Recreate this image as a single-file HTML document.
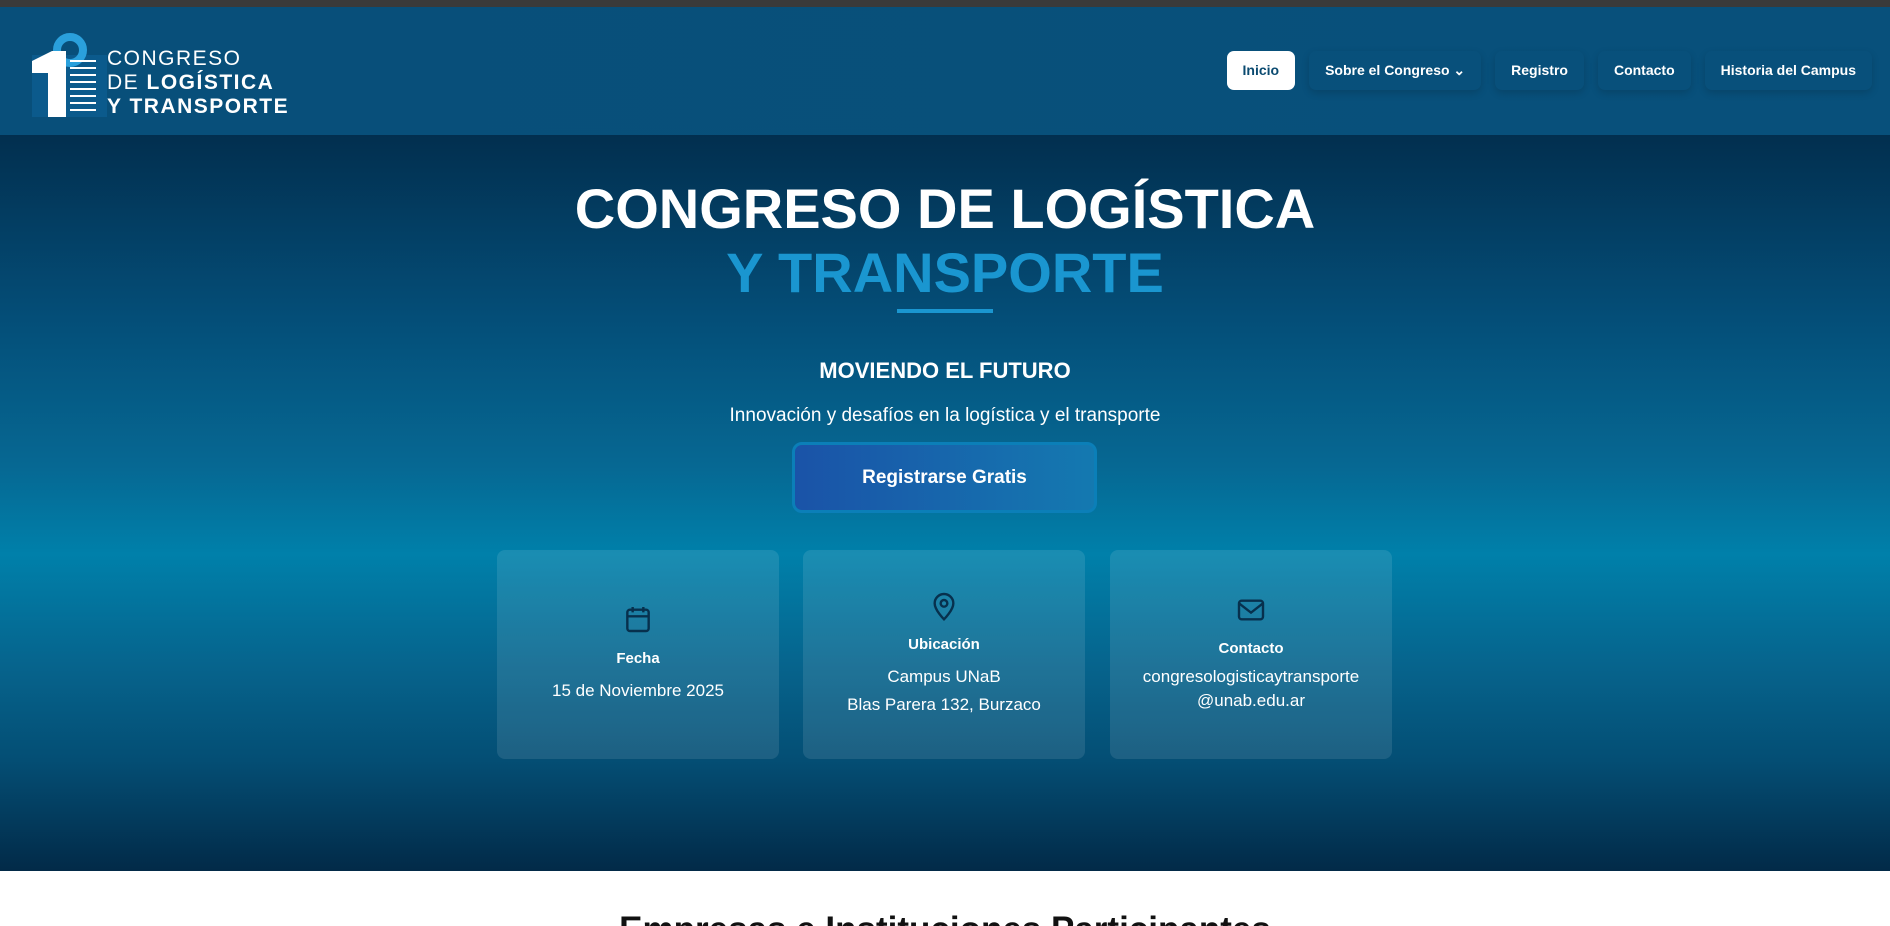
<!DOCTYPE html>
<html><head><meta charset="utf-8"><style>
*{margin:0;padding:0;box-sizing:border-box}
html,body{width:1890px;height:926px;overflow:hidden}
body{font-family:"Liberation Sans",sans-serif;background:#fff;position:relative}
.top{height:7px;background:#3a3a3a}
header{height:128px;background:linear-gradient(90deg,#084f7a,#08507b);position:relative}
.logo{position:absolute;left:32px;top:24px}
.lt{position:absolute;left:75px;top:16px;color:#fff;font-size:21px;line-height:24px;letter-spacing:1.5px;white-space:nowrap}
nav{position:absolute;right:18px;top:44px;display:flex;gap:14px}
nav a{display:block;padding:0 16px;height:39px;line-height:39px;font-size:14px;font-weight:bold;color:#fff;border-radius:7px;box-shadow:0 3px 8px rgba(0,0,0,.15);text-decoration:none}
nav a.on{background:#fff;color:#0a4a70;box-shadow:none}
.hero{height:736px;background:linear-gradient(180deg,#022f4f 0%,#044e78 25%,#066893 45%,#0080aa 57%,#06648d 72%,#044e74 85%,#022a48 100%);position:relative;text-align:center;color:#fff}
h1{position:absolute;width:100%;font-size:56px;line-height:64px;font-weight:bold}
h1 span{color:#1a96d0}
.ul{position:absolute;left:897px;top:174px;width:96px;height:4px;background:#1a96d0}
.mv{position:absolute;top:223px;width:100%;font-size:22px;font-weight:bold}
.sb{position:absolute;top:270px;width:100%;font-size:19px}
.btn{position:absolute;left:792px;top:307px;width:305px;height:71px;border-radius:10px;border:3px solid #0b7fb8;background:linear-gradient(90deg,#1a53a8,#1479b0);font-size:19px;font-weight:bold;line-height:65px}
.card{position:absolute;top:415px;width:282px;height:209px;border-radius:8px;background:rgba(255,255,255,.1)}
.card svg{display:block;margin:0 auto}
.card b{display:block;font-size:15px}
.card p{font-size:17px;line-height:28px}
h2{position:absolute;top:910px;left:0;width:1890px;text-align:center;font-size:35px;color:#111}
</style></head><body>
<div class="top"></div>
<header>
<div class="logo">
<svg width="90" height="90" viewBox="0 0 90 90">
<rect x="0" y="24" width="75" height="62" fill="#0b5a8c"/>
<circle cx="38" cy="19" r="13" fill="none" stroke="#2aa0dc" stroke-width="8"/>
<path d="M0 30 L20 20 H34 V86 H16 V42 H0Z" fill="#fff"/>
<g stroke="#fff" stroke-width="2"><line x1="38" y1="30" x2="64" y2="30"/><line x1="38" y1="37" x2="64" y2="37"/><line x1="38" y1="44" x2="64" y2="44"/><line x1="38" y1="51" x2="64" y2="51"/><line x1="38" y1="58" x2="64" y2="58"/><line x1="38" y1="65" x2="64" y2="65"/><line x1="38" y1="72" x2="64" y2="72"/><line x1="38" y1="79" x2="64" y2="79"/></g>
</svg>
<div class="lt">CONGRESO<br>DE <b>LOGÍSTICA</b><br><b>Y TRANSPORTE</b></div>
</div>
<nav><a class="on">Inicio</a><a>Sobre el Congreso &#8964;</a><a>Registro</a><a>Contacto</a><a>Historia del Campus</a></nav>
</header>
<div class="hero">
<h1 style="top:42px">CONGRESO DE LOGÍSTICA<br><span>Y TRANSPORTE</span></h1>
<div class="ul"></div>
<div class="mv">MOVIENDO EL FUTURO</div>
<div class="sb">Innovación y desafíos en la logística y el transporte</div>
<div class="btn">Registrarse Gratis</div>
<div class="card" style="left:497px"><svg style="margin-top:52px" width="32" height="34" viewBox="0 0 24 24" fill="none" stroke="#07304d" stroke-width="1.8"><rect x="4" y="5" width="16" height="16" rx="2"/><path d="M4 10h16M8 3v4M16 3v4"/></svg><b style="margin-top:14px">Fecha</b><p style="margin-top:10px">15 de Noviembre 2025</p></div>
<div class="card" style="left:803px"><svg style="margin-top:38px" width="32" height="36" viewBox="0 0 24 24" fill="none" stroke="#07304d" stroke-width="1.8"><path d="M12 22s7-7 7-12a7 7 0 0 0-14 0c0 5 7 12 7 12z"/><circle cx="12" cy="10" r="2.5"/></svg><b style="margin-top:12px">Ubicación</b><p style="margin-top:10px">Campus UNaB<br>Blas Parera 132, Burzaco</p></div>
<div class="card" style="left:1110px"><svg style="margin-top:44px" width="34" height="32" viewBox="0 0 24 24" fill="none" stroke="#07304d" stroke-width="1.8"><rect x="3" y="5" width="18" height="14" rx="2"/><path d="M3 7l9 7 9-7"/></svg><b style="margin-top:14px">Contacto</b><p style="margin-top:8px;line-height:24px">congresologisticaytransporte<br>@unab.edu.ar</p></div>
</div>
<h2>Empresas e Instituciones Participantes</h2>
</body></html>
